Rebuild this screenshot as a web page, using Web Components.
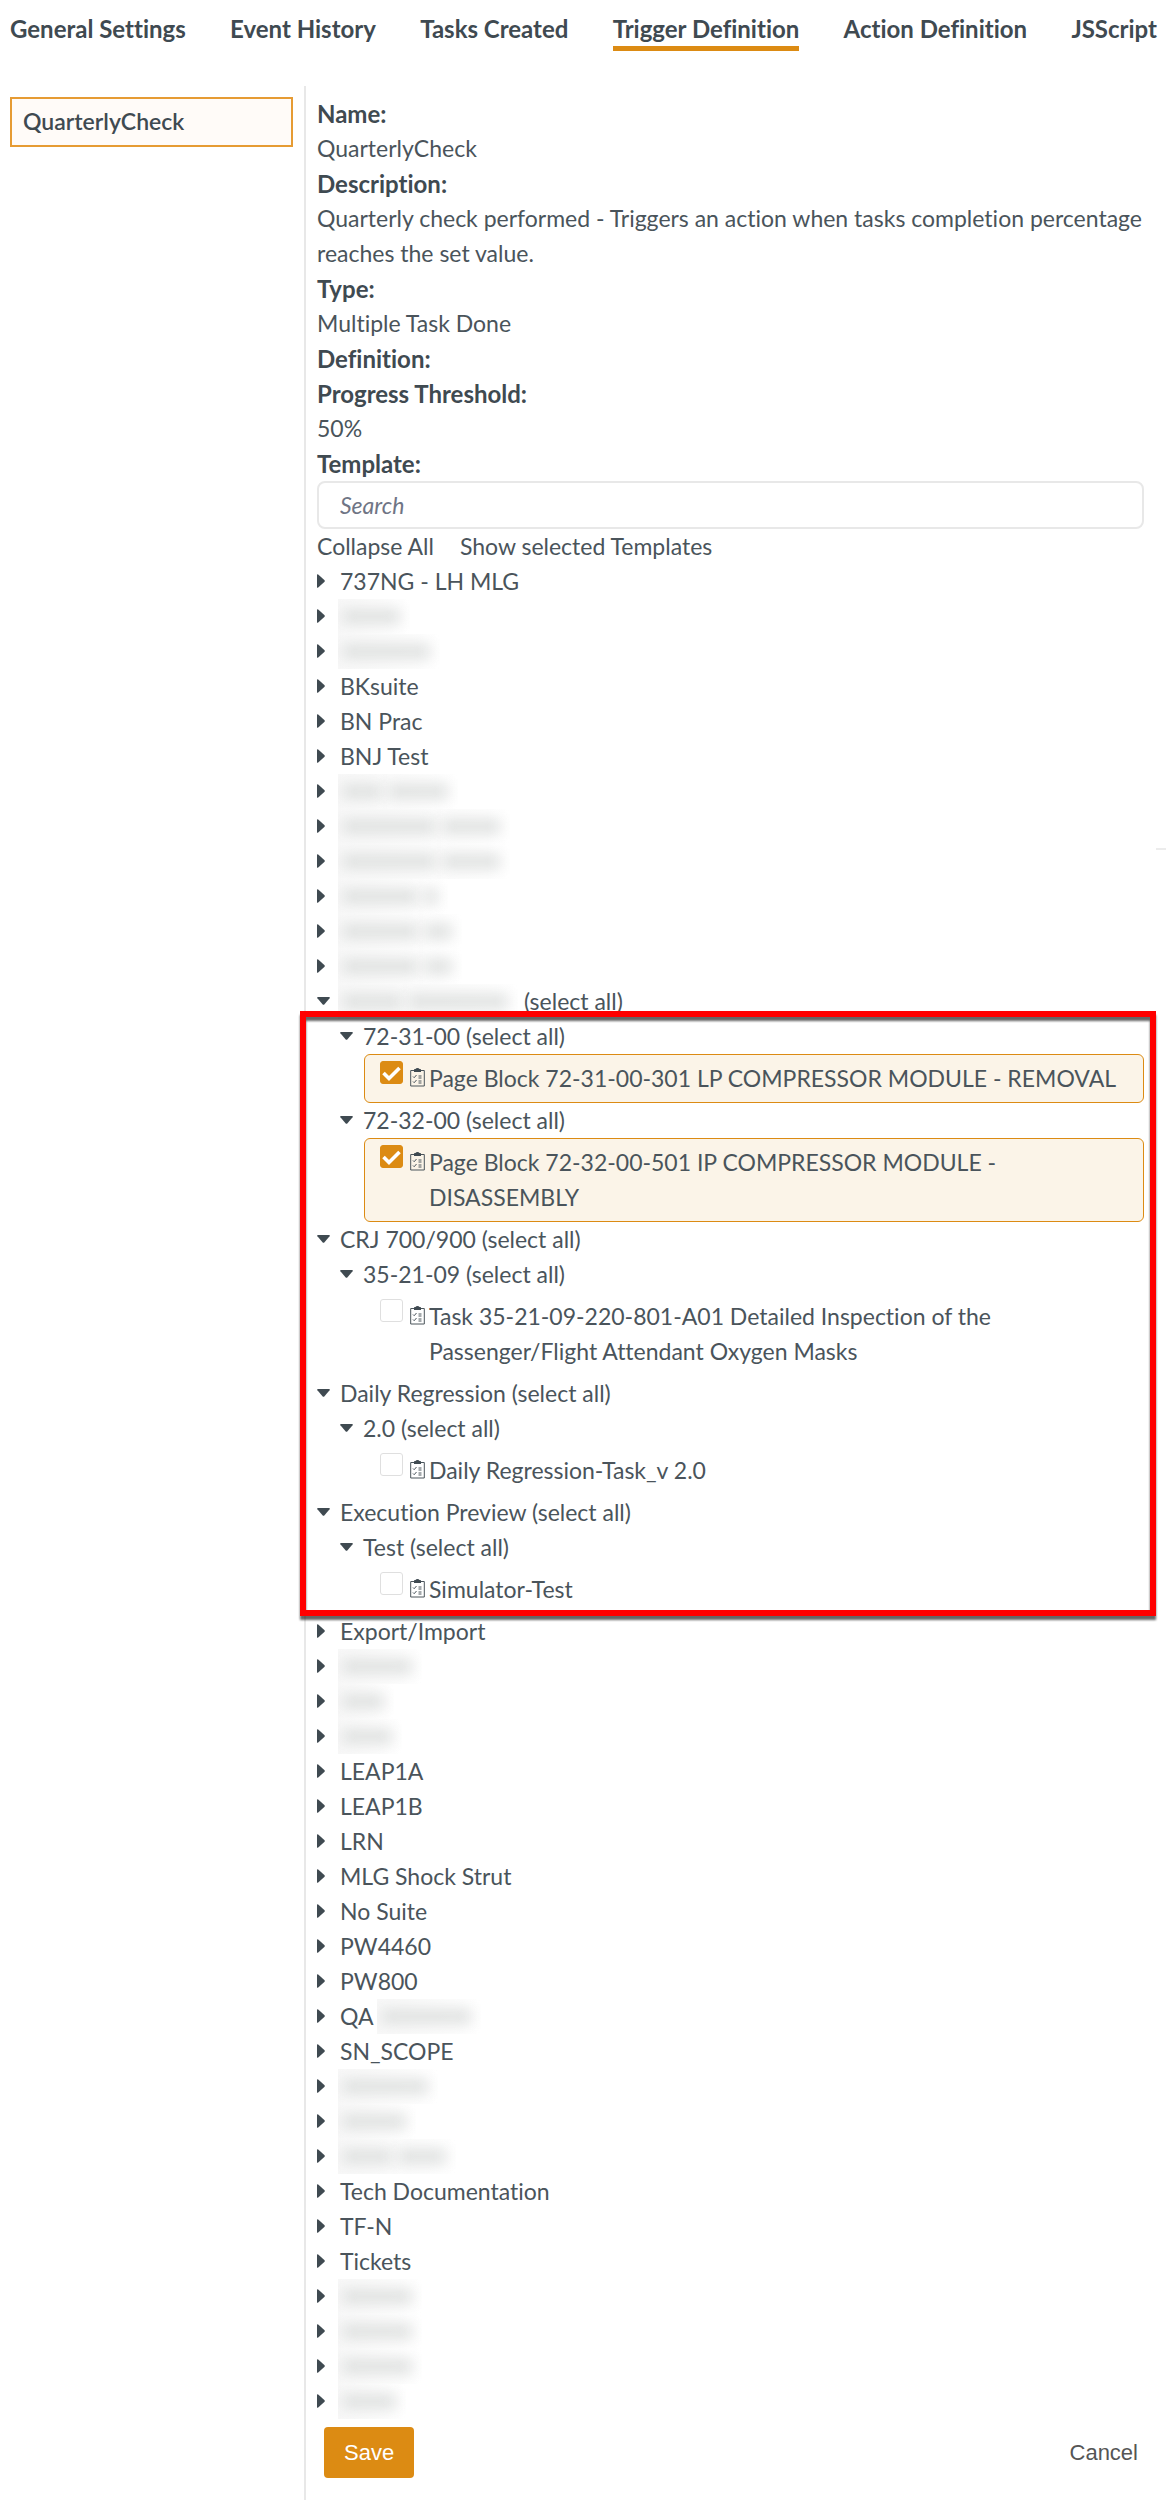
<!DOCTYPE html>
<html lang="en">
<head>
<meta charset="utf-8">
<meta name="viewport" content="width=device-width, initial-scale=1">
<title>Trigger Definition</title>
<style>
  :root {
    --text: #4a545b;
    --strong: #3f4a51;
    --accent: #dc8b13;
    --line: #e8e8e8;
    --row: 35px;
  }
  body {
    margin: 0;
    background: #fff;
    color: var(--text);
    font: 23px/35px Lato, "Open Sans", sans-serif;
    font-variant-ligatures: none;
  }
</style>
</head>
<body>

<trigger-page>
  <tab-bar slot="tabs">
    <tab-link>General Settings</tab-link>
    <tab-link>Event History</tab-link>
    <tab-link>Tasks Created</tab-link>
    <tab-link active>Trigger Definition</tab-link>
    <tab-link>Action Definition</tab-link>
    <tab-link>JSScript</tab-link>
  </tab-bar>

  <side-item slot="side">QuarterlyCheck</side-item>

  <field-entry label="Name:">QuarterlyCheck</field-entry>
  <field-entry label="Description:">Quarterly check performed - Triggers an action when tasks completion percentage reaches the set value.</field-entry>
  <field-entry label="Type:">Multiple Task Done</field-entry>
  <field-entry label="Definition:"></field-entry>
  <field-entry label="Progress Threshold:">50%</field-entry>

  <template-picker>
    <tree-row>737NG - LH MLG</tree-row>
    <tree-row><redacted-text words="58"></redacted-text></tree-row>
    <tree-row><redacted-text words="88"></redacted-text></tree-row>
    <tree-row>BKsuite</tree-row>
    <tree-row>BN Prac</tree-row>
    <tree-row>BNJ Test</tree-row>
    <tree-row><redacted-text words="40 60"></redacted-text></tree-row>
    <tree-row><redacted-text words="94 58"></redacted-text></tree-row>
    <tree-row><redacted-text words="94 58"></redacted-text></tree-row>
    <tree-row><redacted-text words="76 14"></redacted-text></tree-row>
    <tree-row><redacted-text words="76 28"></redacted-text></tree-row>
    <tree-row><redacted-text words="76 28"></redacted-text></tree-row>
    <tree-row open><redacted-text words="60 100"></redacted-text> (select all)</tree-row>
    <marked-region>
      <tree-row open level="2">72-31-00 (select all)</tree-row>
      <task-item checked>Page Block 72-31-00-301 LP COMPRESSOR MODULE - REMOVAL</task-item>
      <tree-row open level="2">72-32-00 (select all)</tree-row>
      <task-item checked>Page Block 72-32-00-501 IP COMPRESSOR MODULE - DISASSEMBLY</task-item>
      <tree-row open>CRJ 700/900 (select all)</tree-row>
      <tree-row open level="2">35-21-09 (select all)</tree-row>
      <task-item>Task 35-21-09-220-801-A01 Detailed Inspection of the Passenger/Flight Attendant Oxygen Masks</task-item>
      <tree-row open>Daily Regression (select all)</tree-row>
      <tree-row open level="2">2.0 (select all)</tree-row>
      <task-item>Daily Regression-Task_v 2.0</task-item>
      <tree-row open>Execution Preview (select all)</tree-row>
      <tree-row open level="2">Test (select all)</tree-row>
      <task-item>Simulator-Test</task-item>
    </marked-region>
    <tree-row>Export/Import</tree-row>
    <tree-row><redacted-text words="70"></redacted-text></tree-row>
    <tree-row><redacted-text words="42"></redacted-text></tree-row>
    <tree-row><redacted-text words="50"></redacted-text></tree-row>
    <tree-row>LEAP1A</tree-row>
    <tree-row>LEAP1B</tree-row>
    <tree-row>LRN</tree-row>
    <tree-row>MLG Shock Strut</tree-row>
    <tree-row>No Suite</tree-row>
    <tree-row>PW4460</tree-row>
    <tree-row>PW800</tree-row>
    <tree-row>QA <redacted-text words="90"></redacted-text></tree-row>
    <tree-row>SN_SCOPE</tree-row>
    <tree-row><redacted-text words="86"></redacted-text></tree-row>
    <tree-row><redacted-text words="64"></redacted-text></tree-row>
    <tree-row><redacted-text words="50 48"></redacted-text></tree-row>
    <tree-row>Tech Documentation</tree-row>
    <tree-row>TF-N</tree-row>
    <tree-row>Tickets</tree-row>
    <tree-row><redacted-text words="70"></redacted-text></tree-row>
    <tree-row><redacted-text words="70"></redacted-text></tree-row>
    <tree-row><redacted-text words="70"></redacted-text></tree-row>
    <tree-row><redacted-text words="54"></redacted-text></tree-row>
  </template-picker>

  <form-actions></form-actions>
</trigger-page>

<script>
  // Small base: every element below only supplies its template
  class BaseElement extends HTMLElement {
    connectedCallback() {
      if (this.shadowRoot) return;
      this.attachShadow({ mode: 'open' });
      this.shadowRoot.innerHTML = this.render();
    }
  }

  class TriggerPage extends BaseElement {
    render() {
      return `
        <style>
          :host { display: flex; flex-direction: column; min-height: 100vh; position: relative; }
          .columns { display: grid; grid-template-columns: 304px minmax(0, 1fr); flex: 1; }
          aside { padding: 11px 11px 0 10px; }
          main { border-left: 2px solid var(--line); padding: 10px 8px 0 11px; }
          .handle { position: absolute; right: 0; top: 848px; width: 10px; height: 2px; background: #ececec; }
        </style>
        <slot name="tabs"></slot>
        <div class="columns">
          <aside><slot name="side"></slot></aside>
          <main><slot></slot></main>
        </div>
        <div class="handle"></div>
      `;
    }
  }
  customElements.define('trigger-page', TriggerPage);

  class TabBar extends BaseElement {
    render() {
      return `
        <style>
          :host { display: block; padding: 11px 9px 35px 10px; }
          nav { display: flex; justify-content: space-between; }
        </style>
        <nav><slot></slot></nav>
      `;
    }
  }
  customElements.define('tab-bar', TabBar);

  class TabLink extends BaseElement {
    render() {
      return `
        <style>
          :host { display: block; }
          a {
            display: block;
            color: var(--strong);
            font-size: 24px;
            font-weight: 700;
            text-decoration: none;
            white-space: nowrap;
            border-bottom: 5px solid transparent;
          }
          :host([active]) a { border-color: var(--accent); }
        </style>
        <a href="#"><slot></slot></a>
      `;
    }
  }
  customElements.define('tab-link', TabLink);

  class SideItem extends BaseElement {
    render() {
      return `
        <style>
          :host { display: block; }
          a {
            display: block;
            box-sizing: border-box;
            height: 50px;
            padding: 5px 11px;
            border: 2px solid #e69b33;
            background: #fffbf8;
            color: var(--strong);
            font-weight: 600;
            text-decoration: none;
          }
        </style>
        <a href="#"><slot></slot></a>
      `;
    }
  }
  customElements.define('side-item', SideItem);

  class FieldEntry extends BaseElement {
    render() {
      return `
        <style>
          :host { display: block; }
          dl, dd { margin: 0; }
          dt { color: var(--strong); font-size: 24px; font-weight: 700; }
        </style>
        <dl>
          <dt>${this.getAttribute('label')}</dt>
          <dd><slot></slot></dd>
        </dl>
      `;
    }
  }
  customElements.define('field-entry', FieldEntry);

  class TemplatePicker extends BaseElement {
    render() {
      return `
        <style>
          :host { display: block; padding-right: 14px; }
          label { display: block; color: var(--strong); font-size: 24px; font-weight: 700; }
          input {
            display: block;
            box-sizing: border-box;
            width: 100%;
            height: 48px;
            padding: 0 21px;
            border: 2px solid var(--line);
            border-radius: 8px;
            background: #fff;
            color: inherit;
            font: inherit;
          }
          input::placeholder { color: #6f7585; font-style: italic; opacity: 1; }
          .links { display: flex; gap: 26px; }
          .links a { color: inherit; text-decoration: none; }
        </style>
        <label for="search">Template:</label>
        <input id="search" type="text" placeholder="Search">
        <div class="links">
          <a href="#">Collapse All</a>
          <a href="#">Show selected Templates</a>
        </div>
        <slot></slot>
      `;
    }
  }
  customElements.define('template-picker', TemplatePicker);

  class TreeRow extends BaseElement {
    render() {
      const arrow = this.hasAttribute('open')
        ? '<svg width="13" height="8" viewBox="0 0 13 8"><path d="M1 0H12Q13.5 0 12.600 1.200L7.500 7.200Q6.500 8.200 5.500 7.200L.4 1.200Q-.5 0 1 0Z"/></svg>'
        : '<svg width="8" height="14" viewBox="0 0 8 14"><path d="M0 1Q0-.4 1.200.5L7.300 6Q8.300 7 7.300 8L1.200 13.500Q0 14.400 0 13Z"/></svg>';
      return `
        <style>
          :host { display: flex; height: var(--row); white-space: pre; }
          :host([level="2"]) { padding-left: 23px; }
          .arrow { display: flex; align-items: center; width: 23px; height: 33px; flex: none; }
          svg { fill: var(--strong); }
          .label { display: flex; }
        </style>
        <span class="arrow">${arrow}</span>
        <span class="label"><slot></slot></span>
      `;
    }
  }
  customElements.define('tree-row', TreeRow);

  // Smudge in place of a private name, one bar per word
  class RedactedText extends BaseElement {
    render() {
      const bars = this.getAttribute('words').split(' ')
        .map((width) => `<i style="width:${width}px"></i>`).join('');
      return `
        <style>
          :host {
            display: inline-flex;
            align-items: center;
            gap: 6px;
            height: var(--row);
            margin-left: -2px;
            padding: 0 10px 0 4px;
            overflow: hidden;
            background: linear-gradient(to right, #f8f8f8, #fff);
          }
          i { height: 15px; background: #dfe1e0; filter: blur(7px); }
        </style>
        ${bars}
      `;
    }
  }
  customElements.define('redacted-text', RedactedText);

  class TaskItem extends BaseElement {
    render() {
      return `
        <style>
          :host {
            display: block;
            margin-left: 47px;
            padding: 6px 15px;
            border: 1px solid transparent;
            border-radius: 6px;
          }
          :host([checked]) { border-color: var(--accent); background: #fbf4e8; }
          label { display: flex; }
          input {
            appearance: none;
            flex: none;
            width: 23px;
            height: 23px;
            margin: 0 7px 0 0;
            border: 1px solid #dfdfdf;
            border-radius: 3px;
            background: #fff;
          }
          input:checked {
            border-color: var(--accent);
            background: var(--accent) url('data:image/svg+xml,<svg xmlns="http://www.w3.org/2000/svg" viewBox="0 0 21 21"><path d="M2.500 11l5.500 5.500L18.500 6" fill="none" stroke="white" stroke-width="3.600"/></svg>');
          }
          svg { flex: none; margin: 7px 4px 0 0; }
          span { max-width: 600px; }
          :host([checked]) span { max-width: none; }
        </style>
        <label>
          <input type="checkbox" ${this.hasAttribute('checked') ? 'checked' : ''}>
          <svg width="15" height="19" viewBox="0 0 15 19" fill="none" stroke="#4a545b">
            <path d="M4 2.500H.7V18H14.300V2.500H11"/>
            <path d="M4 4V1.500Q4 1 5 1H5.500Q6 0 7.500 0T9.500 1H10Q11 1 11 1.500V4Z" fill="#3f4a51" stroke="none"/>
            <path d="M3 8.500l1.200 1.200L6.500 7M3 13.500l1.200 1.200L6.500 12M8.500 8h3M8.500 10h3M8.500 13h3M8.500 15h3"/>
          </svg>
          <span><slot></slot></span>
        </label>
      `;
    }
  }
  customElements.define('task-item', TaskItem);

  // Red callout frame laid over the rows it holds
  class MarkedRegion extends BaseElement {
    render() {
      return `
        <style>
          :host { display: block; position: relative; }
          :host::after {
            content: '';
            position: absolute;
            inset: -8px -12px -2px -17px;
            border: 6px solid #f00;
            filter: drop-shadow(0 4px 1px rgba(0, 0, 0, .6));
            pointer-events: none;
          }
        </style>
        <slot></slot>
      `;
    }
  }
  customElements.define('marked-region', MarkedRegion);

  class FormActions extends BaseElement {
    render() {
      return `
        <style>
          :host { display: flex; justify-content: space-between; padding: 8px 0 0 7px; }
          button {
            height: 51px;
            padding: 0 20px;
            border: 0;
            border-radius: 4px;
            background: none;
            color: #555;
            font: 22px "Liberation Sans", sans-serif;
          }
          .save { background: var(--accent); color: #fff; }
        </style>
        <button class="save" type="button">Save</button>
        <button type="button">Cancel</button>
      `;
    }
  }
  customElements.define('form-actions', FormActions);
</script>
</body>
</html>
